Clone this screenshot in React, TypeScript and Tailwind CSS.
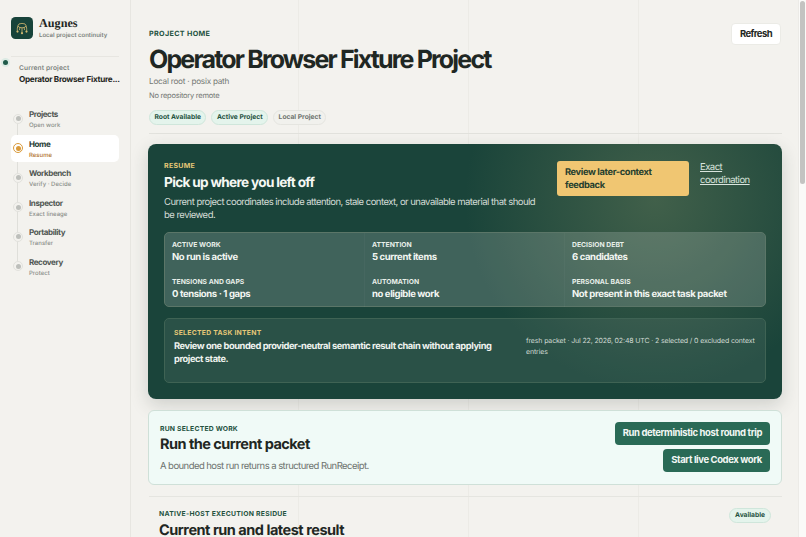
const nav = [
  ["Projects", "Open work"],
  ["Home", "Resume"],
  ["Workbench", "Verify · Decide"],
  ["Inspector", "Exact lineage"],
  ["Portability", "Transfer"],
  ["Recovery", "Protect"],
];

function Logo() {
  return (
    <svg viewBox="0 0 22 22" className="w-[22px] h-[22px] shrink-0">
      <rect width="22" height="22" rx="4.5" fill="#17433a" />
      <g fill="none" stroke="#d3b971" strokeWidth="0.8">
        <ellipse cx="11" cy="8.6" rx="4" ry="2.2" />
        <path d="M7 8.8c-.7 1.6-.8 3.2-.6 5M15 8.8c.7 1.6.8 3.2.6 5M11 10.8v4.4M9 10.5l-.6 2.6M13 10.5l.6 2.6" />
      </g>
      <g fill="#d3b971">
        <circle cx="6.5" cy="14.6" r="1.1" />
        <circle cx="15.5" cy="14.6" r="1.1" />
        <circle cx="11" cy="16.2" r="1.1" />
      </g>
    </svg>
  );
}

function Metric({ label, value }: { label: string; value: string }) {
  return (
    <div className="px-[7px] pt-[7px] h-[37px]">
      <div className="text-[6.8px] leading-[9px] font-bold text-[#e8efe9] uppercase">{label}</div>
      <div className="text-[9.5px] leading-[13px] mt-[2px] font-bold tracking-[-0.04em] text-[#f3f6f2] whitespace-nowrap">{value}</div>
    </div>
  );
}

export default function App() {
  return (
    <div className="h-screen w-full overflow-hidden flex bg-[#f3f2ee] text-[#1f2723] font-['Inter','Liberation_Sans',sans-serif] [text-rendering:geometricPrecision]">
      <aside className="w-[131px] shrink-0 border-r border-[#e7e6e1] bg-[#f3f2ee]">
        <div className="flex items-start gap-[6px] pl-[11px] pt-[17px]">
          <Logo />
          <div>
            <div className="font-['Liberation_Serif',serif] font-bold text-[12.2px] leading-[13px] text-[#1f2723]">Augnes</div>
            <div className="text-[6px] leading-[8px] mt-[2px] font-semibold text-[#7c827d] whitespace-nowrap">Local project continuity</div>
          </div>
        </div>
        <div className="mx-[11px] mt-[16px] border-t border-[#e7e6e1] relative">
          <span className="absolute left-[-8px] top-[3px] w-[5px] h-[5px] rounded-full bg-[#1f5a49] ring-2 ring-[#dcebe4]" />
        </div>
        <div className="pl-[19px] pt-[7px]">
          <div className="text-[6.6px] leading-[9px] font-semibold tracking-[0.02em] text-[#7c827d]">Current project</div>
          <div className="text-[8.2px] leading-[12px] font-bold tracking-[-0.037em] text-[#1f2723] whitespace-nowrap">Operator Browser Fixture...</div>
        </div>
        <nav className="mt-[20px] ml-[11px] w-[108px] relative">
          <span className="absolute left-[6px] top-[15px] bottom-[15px] w-px bg-[#dfdfda]" />
          {nav.map(([a, b]) => {
            const on = a === "Home";
            return (
              <div key={a} className={`relative flex items-center h-[27px] mb-[2.6px] pl-[2px] rounded-[5px] ${on ? "bg-white" : ""}`}>
                <span className={`w-[10px] h-[10px] rounded-full flex items-center justify-center shrink-0 ${on ? "bg-white border border-[#d99a3a]" : "bg-[#f3f2ee] border border-[#e2e2dd]"}`}>
                  <span className={`w-[5px] h-[5px] rounded-full ${on ? "bg-[#d99a3a]" : "bg-[#bdbfbb]"}`} />
                </span>
                <div className="ml-[6px] mt-[2px]">
                  <div className={`text-[8px] leading-[11px] font-bold tracking-[-0.05em] ${on ? "text-[#1f3b33]" : "text-[#4f5652]"}`}>{a}</div>
                  <div className={`text-[6px] leading-[9px] mt-[1px] font-medium ${on ? "text-[#b0702a]" : "text-[#8b8f8a]"}`}>{b}</div>
                </div>
              </div>
            );
          })}
        </nav>
      </aside>
      <main className="flex-1 min-w-0 pl-[18px] pr-[16px] relative bg-[linear-gradient(90deg,#ecebe6_1px,transparent_1px)] bg-[size:170px_100%] bg-[position:167px_0]">
        <div className="flex justify-between items-start">
          <div>
            <div className="pt-[29px] text-[7.2px] leading-[10px] font-bold tracking-[0.046em] text-[#24523f]">PROJECT HOME</div>
            <h1 className="text-[25px] leading-[34px] mt-[4px] font-bold tracking-[-0.073em] text-[#1f2723] whitespace-nowrap">Operator Browser Fixture Project</h1>
            <div className="text-[8.2px] leading-[12px] mt-[-2px] tracking-[-0.03em] text-[#737874]">Local root · posix path</div>
            <div className="text-[7.5px] leading-[11px] mt-[3px] tracking-[-0.033em] text-[#737874]">No repository remote</div>
            <div className="flex gap-[5px] mt-[8.5px]">
              <span className="h-[15px] px-[4.5px] rounded-full border border-[#cfe6db] bg-[#e4f4ec] text-[6.7px] leading-[13px] font-bold text-[#24523f]">Root Available</span>
              <span className="h-[15px] px-[4.5px] rounded-full border border-[#cfe6db] bg-[#e4f4ec] text-[6.7px] leading-[13px] font-bold text-[#24523f]">Active Project</span>
              <span className="h-[15px] px-[4.5px] rounded-full border border-[#e5e5e0] bg-[#f1f1ed] text-[6.7px] leading-[13px] font-bold text-[#6f7470]">Local Project</span>
            </div>
          </div>
          <button className="mt-[23px] mr-[1px] w-[50px] h-[22px] rounded-[4px] bg-white border border-[#ebebe6] text-[9.5px] tracking-[-0.06em] font-bold text-[#1f2723]">Refresh</button>
        </div>
        <div className="border-t border-[#e2e2dd] mt-[8.5px]" />
        <section className="mt-[10px] -ml-[1px] h-[255px] rounded-[8px] bg-[radial-gradient(circle_at_80%_22%,#41604a_0px,#1a443a_190px)] px-[16px] pt-[17px] shadow-[0_6px_18px_rgba(40,50,45,0.18)]">
          <div className="flex justify-between">
            <div className="w-[380px]">
              <div className="text-[7px] leading-[9px] font-bold tracking-[0.043em] text-[#e5c877]">RESUME</div>
              <div className="text-[13.6px] leading-[18px] mt-[4px] font-bold tracking-[-0.05em] text-[#f6f8f4]">Pick up where you left off</div>
              <div className="text-[9.5px] leading-[12.5px] mt-[5px] tracking-[-0.056em] text-[#d6ded8]">Current project coordinates include attention, stale context, or unavailable material that should be reviewed.</div>
            </div>
            <div className="flex gap-[11px] w-[209px] shrink-0">
              <div className="w-[132px] h-[35px] px-[8px] py-[0px] rounded-[3px] bg-[#f0c672] text-[9.3px] leading-[13px] pt-[5px] font-bold tracking-[-0.04em] text-[#27402f] shrink-0">Review later-context feedback</div>
              <a className="text-[9.5px] leading-[13px] tracking-[-0.056em] text-[#d9e4dd] underline">Exact coordination</a>
            </div>
          </div>
          <div className="mt-[10px] h-[75px] grid grid-cols-3 rounded-[5px] border border-[#5b7668] bg-[rgba(255,255,255,0.17)] divide-x divide-[rgba(255,255,255,0.03)]">
            <div><Metric label="Active work" value="No run is active" /><Metric label="Tensions and gaps" value="0 tensions · 1 gaps" /></div>
            <div><Metric label="Attention" value="5 current items" /><Metric label="Automation" value="no eligible work" /></div>
            <div><Metric label="Decision debt" value="6 candidates" /><Metric label="Personal basis" value="Not present in this exact task packet" /></div>
          </div>
          <div className="mt-[11px] h-[65px] flex justify-between rounded-[5px] border border-[#3f6354] bg-[rgba(255,255,255,0.07)] pl-[9px] pr-[10px] pt-[9px]">
            <div className="w-[325px]">
              <div className="text-[6.8px] leading-[9px] font-bold tracking-[0.04em] text-[#e5c877]">SELECTED TASK INTENT</div>
              <div className="text-[9.3px] leading-[13px] mt-[3px] font-bold tracking-[-0.046em] text-[#eef2ee]">Review one bounded provider-neutral semantic result chain without applying project state.</div>
            </div>
            <div className="w-[229px] text-[7px] leading-[10.5px] mt-[8px] tracking-[-0.02em] text-[#cfd9d2]">fresh packet · Jul 22, 2026, 02:48 UTC · 2 selected / 0 excluded context entries</div>
          </div>
        </section>
        <section className="mt-[11px] -ml-[1px] h-[75px] rounded-[6px] border border-[#cfe0d8] bg-[#f0faf7] flex justify-between pl-[11px] pr-[11px] pt-[12px]">
          <div>
            <div className="text-[6.8px] leading-[9px] mt-[1px] font-bold tracking-[0.03em] text-[#24523f]">RUN SELECTED WORK</div>
            <div className="text-[14.5px] leading-[20px] mt-[2px] font-bold tracking-[-0.036em] text-[#1f2723]">Run the current packet</div>
            <div className="text-[9.5px] leading-[13px] mt-[5px] tracking-[-0.058em] text-[#6c716d]">A bounded host run returns a structured RunReceipt.</div>
          </div>
          <div className="flex flex-col items-end gap-[4px] -mt-[1px]">
            <button className="h-[23px] px-[8px] rounded-[4px] bg-[#2a6a56] text-[9.5px] tracking-[-0.041em] font-bold text-[#f3f7f4]">Run deterministic host round trip</button>
            <button className="h-[23px] px-[8px] rounded-[4px] bg-[#2a6a56] text-[9.5px] tracking-[-0.041em] font-bold text-[#f3f7f4]">Start live Codex work</button>
          </div>
        </section>
        <div className="border-t border-[#e5e5e0] mt-[11px]" />
        <div className="flex justify-between pl-[10px] pr-[11px] pt-[12px]">
          <div>
            <div className="text-[6.8px] leading-[9px] font-bold tracking-[0.04em] text-[#24523f]">NATIVE-HOST EXECUTION RESIDUE</div>
            <div className="text-[14.5px] leading-[18px] mt-[4px] font-bold tracking-[-0.033em] text-[#1f2723] whitespace-nowrap">Current run and latest result</div>
          </div>
          <span className="h-[15px] -mt-[1px] px-[5px] rounded-full border border-[#cfe6db] bg-[#e4f4ec] text-[6.7px] leading-[13px] font-bold text-[#24523f]">Available</span>
        </div>
      </main>
      <div className="w-[8px] shrink-0 bg-[#fafaf8] border-l border-[#ecebe7] flex justify-center pt-[1px]">
        <div className="w-[5px] h-[183px] rounded-full bg-[#c3c3c1]" />
      </div>
    </div>
  );
}
